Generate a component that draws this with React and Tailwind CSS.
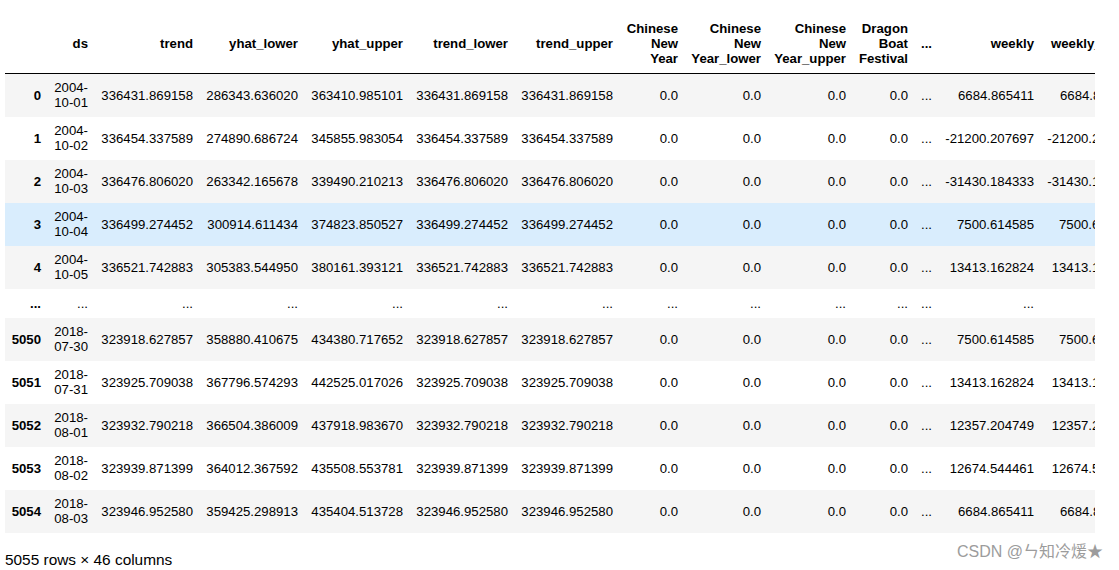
import React from "react";

const columns = [
  { key: "ds", label: ["ds"], w: 47 },
  { key: "trend", label: ["trend"], w: 105 },
  { key: "yl", label: ["yhat_lower"], w: 105 },
  { key: "yu", label: ["yhat_upper"], w: 105 },
  { key: "tl", label: ["trend_lower"], w: 105 },
  { key: "tu", label: ["trend_upper"], w: 105 },
  { key: "cny", label: ["Chinese", "New", "Year"], w: 65 },
  { key: "cnyl", label: ["Chinese", "New", "Year_lower"], w: 83 },
  { key: "cnyu", label: ["Chinese", "New", "Year_upper"], w: 85 },
  { key: "dbf", label: ["Dragon", "Boat", "Festival"], w: 62 },
  { key: "more", label: ["..."], w: 24 },
  { key: "weekly", label: ["weekly"], w: 102 },
  { key: "weeklyl", label: ["weekly_lower"], w: 102 },
  { key: "weeklyu", label: ["weekly_upper"], w: 102 },
  { key: "yhat", label: ["yhat"], w: 102 },
];

const raw = [
  ["0", "2004-10-01", "336431.869158", "286343.636020", "363410.985101", "6684.865411"],
  ["1", "2004-10-02", "336454.337589", "274890.686724", "345855.983054", "-21200.207697"],
  ["2", "2004-10-03", "336476.806020", "263342.165678", "339490.210213", "-31430.184333"],
  ["3", "2004-10-04", "336499.274452", "300914.611434", "374823.850527", "7500.614585"],
  ["4", "2004-10-05", "336521.742883", "305383.544950", "380161.393121", "13413.162824"],
  null,
  ["5050", "2018-07-30", "323918.627857", "358880.410675", "434380.717652", "7500.614585"],
  ["5051", "2018-07-31", "323925.709038", "367796.574293", "442525.017026", "13413.162824"],
  ["5052", "2018-08-01", "323932.790218", "366504.386009", "437918.983670", "12357.204749"],
  ["5053", "2018-08-02", "323939.871399", "364012.367592", "435508.553781", "12674.544461"],
  ["5054", "2018-08-03", "323946.952580", "359425.298913", "435404.513728", "6684.865411"],
];

const rowCells = (r) => {
  const [, ds, trend, yl, yu, wk] = r;
  return [
    [ds.slice(0, 5), ds.slice(5)],
    [trend],
    [yl],
    [yu],
    [trend],
    [trend],
    ["0.0"],
    ["0.0"],
    ["0.0"],
    ["0.0"],
    ["..."],
    [wk],
    [wk],
    [wk],
    [(parseFloat(trend) + parseFloat(wk)).toFixed(6)],
  ];
};

const totalWidth = 42 + columns.reduce((s, c) => s + c.w, 0);

export default function App() {
  return (
    <div
      className="relative w-[1119px] h-[570px] bg-white text-black overflow-hidden"
      style={{ fontFamily: '"Liberation Sans", Arial, sans-serif' }}
    >
      <div className="ml-[5px] mt-[16px] w-[1090px] overflow-hidden">
        <table
          className="table-fixed border-collapse text-[13.2px] leading-[15px]"
          style={{ width: totalWidth }}
        >
          <colgroup>
            <col style={{ width: 42 }} />
            {columns.map((c) => (
              <col key={c.key} style={{ width: c.w }} />
            ))}
          </colgroup>
          <thead>
            <tr>
              <th className="border-b border-black px-[6px] pt-[5px] pb-[7px]"></th>
              {columns.map((c) => (
                <th
                  key={c.key}
                  className="border-b border-black px-[6px] pt-[5px] pb-[7px] text-right align-middle font-bold whitespace-nowrap"
                >
                  {c.label.map((l, i) => (
                    <div key={i}>{l}</div>
                  ))}
                </th>
              ))}
            </tr>
          </thead>
          <tbody>
            {raw.map((r, ri) => {
              const bg =
                ri === 3
                  ? "bg-[#d9edfd]"
                  : ri % 2 === 0
                  ? "bg-[#f5f5f5]"
                  : "bg-white";
              if (!r) {
                return (
                  <tr key={ri} className={`h-[29px] ${bg}`}>
                    <th className="px-[6px] text-right font-bold">...</th>
                    {columns.map((c) => (
                      <td key={c.key} className="px-[6px] text-right">
                        ...
                      </td>
                    ))}
                  </tr>
                );
              }
              return (
                <tr key={ri} className={`h-[43px] ${bg}`}>
                  <th className="px-[6px] text-right font-bold">{r[0]}</th>
                  {rowCells(r).map((lines, ci) => (
                    <td
                      key={ci}
                      className="px-[6px] text-right align-middle whitespace-nowrap"
                    >
                      {lines.map((l, i) => (
                        <div key={i}>{l}</div>
                      ))}
                    </td>
                  ))}
                </tr>
              );
            })}
          </tbody>
        </table>
      </div>
      <p className="ml-[5px] mt-[19px] text-[15.4px] leading-[16px]">
        5055 rows × 46 columns
      </p>
      <div
        className="absolute right-[16px] bottom-[9px] text-[16px] leading-[18px] text-[#9c9c9c]"
        style={{
          fontFamily: '"Liberation Sans", "Noto Sans CJK SC", sans-serif',
        }}
      >
        CSDN @ㄣ知冷煖★
      </div>
    </div>
  );
}
